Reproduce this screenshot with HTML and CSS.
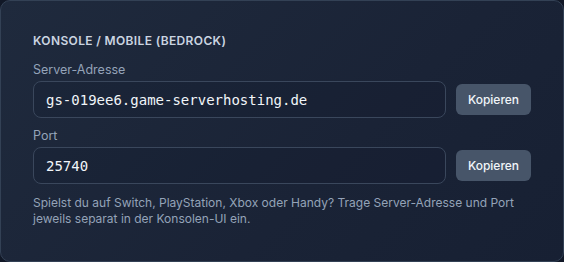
FILE: index.html
```html
<!DOCTYPE html>
<html lang="de">
<head>
<meta charset="utf-8">
<link rel="stylesheet" href="styles.css">
</head>
<body>
<section class="card">
  <h2 class="title">Konsole / Mobile (Bedrock)</h2>
  <div class="field">
    <label class="label">Server-Adresse</label>
    <div class="row">
      <div class="input">gs-019ee6.game-serverhosting.de</div>
      <button class="btn">Kopieren</button>
    </div>
  </div>
  <div class="field">
    <label class="label">Port</label>
    <div class="row">
      <div class="input">25740</div>
      <button class="btn">Kopieren</button>
    </div>
  </div>
  <p class="help">Spielst du auf Switch, PlayStation, Xbox oder Handy? Trage Server-Adresse und Port jeweils separat in der Konsolen-UI ein.</p>
</section>
</body>
</html>
```
FILE: styles.css
```css
* { box-sizing: border-box; }
html, body { margin: 0; background: #111827; }
body { font-family: Inter, "Noto Sans", sans-serif; }
.card {
  width: 564px;
  height: 262px;
  border: 1px solid #334155;
  border-radius: 10px;
  padding: 32px;
  background: linear-gradient(135deg, #1f2a3d 0%, #1a2336 60%, #172033 100%);
}
.title {
  margin: 0 0 12px;
  font-size: 12px;
  line-height: 16px;
  font-weight: 600;
  letter-spacing: 0.03em;
  text-transform: uppercase;
  color: #cbd5e1;
}
.field { margin-bottom: 9px; }
.label {
  display: block;
  font-size: 12.5px;
  line-height: 18px;
  color: #94a3b8;
  margin-bottom: 2px;
}
.row { display: flex; align-items: center; gap: 10px; }
.input {
  flex: 1;
  height: 37px;
  border: 1px solid #3a475c;
  border-radius: 8px;
  padding: 0 12px;
  display: flex;
  align-items: center;
  font-family: "DejaVu Sans Mono", "Liberation Mono", monospace;
  font-size: 14px;
  color: #f1f5f9;
  background: rgba(15, 23, 42, 0.15);
}
.btn {
  width: 75px;
  height: 31px;
  border: 0;
  border-radius: 6px;
  background: #475569;
  color: #f1f5f9;
  font-family: Inter, sans-serif;
  font-size: 12px;
  font-weight: 500;
  padding: 0;
}
.help {
  margin: 11px 0 0;
  font-size: 12px;
  line-height: 16px;
  color: #94a3b8;
}
```
